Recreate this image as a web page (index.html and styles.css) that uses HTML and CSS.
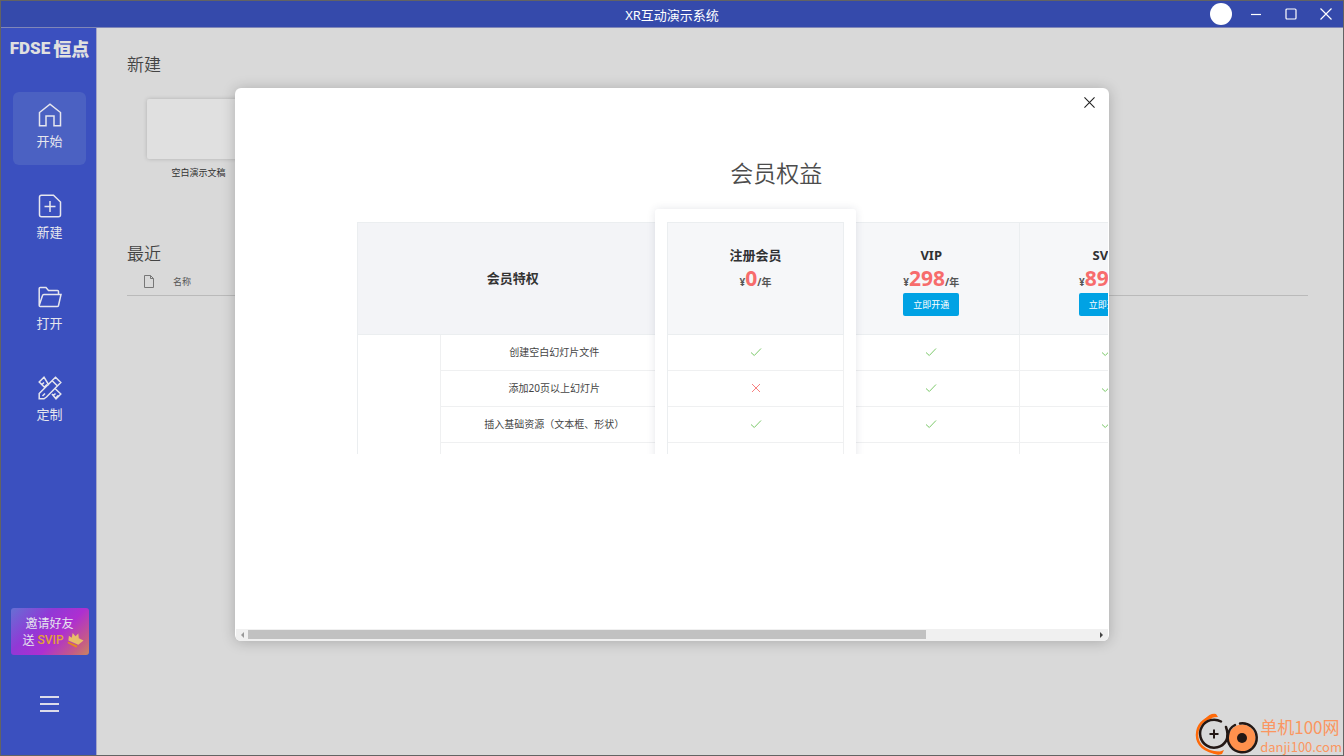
FILE: index.html
```html
<!DOCTYPE html>
<html lang="zh-CN">
<head>
<meta charset="utf-8">
<title>XR互动演示系统</title>
<link rel="stylesheet" href="styles.css">
</head>
<body>
<svg class="defs" aria-hidden="true">
  <symbol id="check" viewBox="0 0 12 12"><path d="M1 6.500 4.300 9.500 11 2.500"/></symbol>
  <symbol id="cross" viewBox="0 0 12 12"><path d="M2 2 10 10M10 2 2 10"/></symbol>
</svg>
<div class="window">
  <header class="titlebar">
    <h1 class="app-title">XR互动演示系统</h1>
    <div class="window-tools">
      <button class="avatar" type="button" aria-label="用户"></button>
      <button class="tool" type="button" aria-label="最小化"><svg viewBox="0 0 12 12"><path d="M1 6.500H11"/></svg></button>
      <button class="tool" type="button" aria-label="最大化"><svg viewBox="0 0 12 12"><rect x="1" y="1" width="10" height="10" rx="1"/></svg></button>
      <button class="tool" type="button" aria-label="关闭"><svg viewBox="0 0 12 12"><path d="M.5.5 11.500 11.500M11.500.5.5 11.500"/></svg></button>
    </div>
  </header>
  <div class="body">
    <aside class="sidebar">
      <div class="logo"><span class="logo-latin">FDSE</span><span class="logo-cn">恒点</span></div>
      <nav class="menu">
        <button class="menu-item active" type="button">
          <svg viewBox="0 0 24 24"><path d="M1.500 9.500 12 1.200 22.500 9.500V22.800H16V13H8V22.800H1.500Z"/></svg>
          <span>开始</span>
        </button>
        <button class="menu-item" type="button">
          <svg viewBox="0 0 24 24"><path d="M3.500 1.200H15.500L22.500 8V20.800Q22.500 22.800 20.500 22.800H3.500Q1.500 22.800 1.500 20.800V3.200Q1.500 1.200 3.500 1.200ZM12 7V18M6.500 12.500H17.500"/></svg>
          <span>新建</span>
        </button>
        <button class="menu-item" type="button">
          <svg viewBox="0 0 24 24"><path d="M1.200 20.500V3.500Q1.200 2.500 2.200 2.500H8L10.500 5.500H19.500Q20.500 5.500 20.500 6.500V9.500M1.200 20.500 4.500 10.500Q4.800 9.500 5.800 9.500H23L20.500 20.500Q20.200 21.500 19.200 21.500H2.200Q1.200 21.500 1.200 20.500Z"/></svg>
          <span>打开</span>
        </button>
        <button class="menu-item" type="button">
          <svg viewBox="0 0 24 24"><path d="M17.500 1.200 22.800 6.500 8.500 21 6 22.800H1.200V17.500ZM14 4.500 19.500 10M4.500 20 7 17.500M9.500 9.500 10.500 8.500 6 1.200 1.200 6 7.500 12.300M4 8.500 6 6.500M6.500 11 9 8.500M14 18 18 22.800 22.800 18 17 12.500M15.500 19.500 17.500 17.500M18 22 20 19.500"/></svg>
          <span>定制</span>
        </button>
      </nav>
      <div class="sidebar-foot">
        <button class="invite" type="button">
          <span>邀请好友</span>
          <span class="invite-row"><span>送</span><b>SVIP</b>
            <svg viewBox="0 0 18 18"><path class="crown" d="M1.500 9 2 4 5 6 6 1 9 4.500 12 1.500 12.500 6.500 17.500 9 12 13.500Z"/><path class="crown-base" d="M1 10 11 14.500 10 16.800 .8 12Z"/></svg>
          </span>
        </button>
        <button class="burger" type="button" aria-label="菜单"><i></i><i></i><i></i></button>
      </div>
    </aside>
    <main class="main">
      <h2 class="section-title">新建</h2>
      <button class="blank" type="button"><span class="blank-sheet"></span><span>空白演示文稿</span></button>
      <h2 class="section-title recent">最近</h2>
      <div class="list-head">
        <svg viewBox="0 0 10 13"><path d="M.5.5H6.500L9.500 3.500V12.500H.5ZM6.500.5V3.500H9.500"/></svg>
        <span>名称</span>
      </div>
    </main>
  </div>

  <div class="overlay">
    <section class="modal" role="dialog" aria-labelledby="benefits">
      <button class="modal-close" type="button" aria-label="关闭"><svg viewBox="0 0 12 12"><path d="M.5.5 11.500 11.500M11.500.5.5 11.500"/></svg></button>
      <div class="scroller">
        <div class="page">
          <h2 class="page-title" id="benefits">会员权益</h2>
          <div class="table-clip">
            <table class="plans">
              <colgroup><col class="c-group"><col class="c-name"><col class="c-plan"><col class="c-plan"><col class="c-plan"></colgroup>
              <thead>
                <tr>
                  <th class="feature" colspan="2">会员特权</th>
                  <th class="picked"><div class="plan-name">注册会员</div><div class="price">¥<b>0</b>/年</div></th>
                  <th><div class="plan-name">VIP</div><div class="price">¥<b>298</b>/年</div><button class="buy" type="button">立即开通</button></th>
                  <th><div class="plan-name">SVIP</div><div class="price">¥<b>898</b>/年</div><button class="buy" type="button">立即开通</button></th>
                </tr>
              </thead>
              <tbody>
                <tr><td class="group" rowspan="4"></td><td>创建空白幻灯片文件</td><td class="picked"><svg class="yes"><use href="#check"/></svg></td><td><svg class="yes"><use href="#check"/></svg></td><td><svg class="yes"><use href="#check"/></svg></td></tr>
                <tr><td>添加20页以上幻灯片</td><td class="picked"><svg class="no"><use href="#cross"/></svg></td><td><svg class="yes"><use href="#check"/></svg></td><td><svg class="yes"><use href="#check"/></svg></td></tr>
                <tr><td>插入基础资源（文本框、形状）</td><td class="picked"><svg class="yes"><use href="#check"/></svg></td><td><svg class="yes"><use href="#check"/></svg></td><td><svg class="yes"><use href="#check"/></svg></td></tr>
                <tr><td></td><td class="picked"></td><td></td><td></td></tr>
              </tbody>
            </table>
          </div>
        </div>
      </div>
      <div class="scrollbar">
        <button class="arrow left" type="button" aria-label="向左"></button>
        <div class="track"><div class="thumb"></div></div>
        <button class="arrow right" type="button" aria-label="向右"></button>
      </div>
    </section>
  </div>

  <div class="watermark">
    <svg viewBox="0 0 64 42">
      <path d="M17 4C8 6 2 13 2 22c0 9 7 17 22 18" fill="none" stroke="#ff6a0a" stroke-width="2.500"/>
      <path d="M10 6Q15 0 21 1L23 4Q16 4 11 8ZM16 38Q24 40 29 37L27 41Q22 43 18 40Z" fill="#ff6a0a"/>
      <path d="M26 8.500A14 14 0 1 0 31 28Q34 22 31 14" fill="none" stroke="#231815" stroke-width="2.500" stroke-linecap="round"/>
      <path d="M19 16.500V25.500M14.500 21H23.500" stroke="#231815" stroke-width="2"/>
      <circle cx="47" cy="25" r="13.500" fill="#ff914d"/>
      <circle cx="47" cy="25" r="5" fill="#231815"/>
      <path d="M45 10.500A14.500 14.500 0 1 1 33 22Q34 15 40 12" fill="none" stroke="#231815" stroke-width="2.500" stroke-linecap="round"/>
    </svg>
    <div class="mark-text"><span class="mark-cn">单机100网</span><span class="mark-url">danji100.com</span></div>
  </div>
</div>
</body>
</html>
```

FILE: styles.css
```css
* { box-sizing: border-box; }
body {
  margin: 0;
  font-family: "Noto Sans", "Noto Sans CJK SC", sans-serif;
  color: #444;
}
h1, h2 { margin: 0; font-weight: 400; }
button {
  margin: 0;
  padding: 0;
  border: 0;
  background: none;
  color: inherit;
  font: inherit;
}
svg { display: block; fill: none; stroke: currentColor; }
.defs { display: none; }

.window {
  position: relative;
  display: flex;
  flex-direction: column;
  min-height: 100vh;
  border: 1px solid #636363;
  background: #d9d9d9;
}
.titlebar {
  display: grid;
  grid-template-columns: 1fr auto 1fr;
  align-items: center;
  height: 27px;
  border-bottom: 1px solid #8087b8;
  background: #354aab;
  color: #fff;
}
.app-title { grid-column: 2; padding-top: 1px; font-size: 13px; line-height: 18px; }
.window-tools {
  display: flex;
  justify-content: flex-end;
  align-items: center;
  gap: 23px;
  padding-right: 11px;
}
.avatar { width: 22px; height: 22px; border-radius: 50%; background: #fff; }
.tool svg { width: 12px; height: 12px; stroke-width: 1.2; }
.avatar + .tool { margin-left: -5px; }

.body { display: flex; flex: 1; }
.sidebar {
  display: flex;
  flex-direction: column;
  align-items: center;
  width: 96px;
  padding-left: 2px;
  border-right: 1px solid #a4a5c9;
  background: #3b50bf;
  color: #e6e6ee;
}
.logo {
  display: flex;
  align-items: center;
  gap: 3px;
  height: 40px;
  margin-bottom: 24px;
  color: #e0e0e0;
  font-weight: 900;
  line-height: 20px;
  white-space: nowrap;
}
.logo-latin { font-family: Roboto, sans-serif; font-size: 17px; }
.logo-cn { font-family: "Noto Sans CJK SC", sans-serif; font-size: 18px; }
.menu { display: flex; flex-direction: column; gap: 18px; }
.menu-item {
  display: flex;
  flex-direction: column;
  align-items: center;
  gap: 4px;
  width: 73px;
  height: 73px;
  padding-top: 11px;
  border-radius: 6px;
  font-size: 13px;
  line-height: 20px;
}
.menu-item svg { width: 24px; height: 24px; stroke-width: 1.5; }
.menu-item.active { background: #4b61c2; }
.sidebar-foot {
  display: flex;
  flex-direction: column;
  align-items: center;
  gap: 41px;
  margin-top: auto;
  padding-bottom: 43px;
}
.invite {
  width: 78px;
  height: 47px;
  border-radius: 3px;
  background: linear-gradient(135deg, #6670d4 0%, #9138d6 35%, #ad2fd1 60%, #c55a88 85%, #c98560 100%);
  font-size: 12px;
  line-height: 17px;
}
.invite-row { display: flex; align-items: center; gap: 3px; padding-left: 12px; }
.invite-row b { color: #e2a23a; font-family: Roboto, sans-serif; font-weight: 500; }
.invite-row svg { width: 17px; height: 17px; stroke: none; }
.crown { fill: #e8bd6a; }
.crown-base { fill: #e58a1f; }
.burger { display: flex; flex-direction: column; gap: 5px; }
.burger i { width: 19px; height: 2px; background: #dcdcea; }

.main { flex: 1; padding: 24px 35px 0 30px; }
.section-title {
  font-size: 17px;
  line-height: 26px;
  font-weight: 350;
  color: #444;
}
.blank {
  display: flex;
  flex-direction: column;
  align-items: center;
  gap: 7px;
  margin: 21px 0 0 20px;
  color: #333;
  font-size: 9px;
  line-height: 14px;
}
.blank-sheet {
  width: 103px;
  height: 60px;
  border-radius: 2px;
  background: #e0e0e0;
  box-shadow: 0 0 4px rgba(0, 0, 0, .18);
}
.recent { margin-top: 61px; }
.list-head {
  display: flex;
  align-items: center;
  gap: 19px;
  height: 29px;
  padding-left: 17px;
  border-bottom: 1px solid #bababa;
  color: #555;
  font-size: 9px;
}
.list-head svg { width: 10px; height: 13px; color: #777; stroke-width: 1; }

.overlay {
  position: absolute;
  inset: 0;
  display: flex;
  justify-content: center;
  align-items: flex-start;
  padding-top: 87px;
}
.modal {
  position: relative;
  width: 65vw;
  padding: 0 1px;
  overflow: hidden;
  border-radius: 6px;
  background: #fff;
  box-shadow: 0 1px 14px rgba(0, 0, 0, .22);
}
.modal-close { position: absolute; top: 9px; right: 14px; color: #222; }
.modal-close svg { width: 11px; height: 11px; stroke-width: 1.2; }
.scroller { min-height: 541px; padding-top: 68px; overflow: hidden; }
.page { width: 1080px; }
.page-title {
  color: #4c4c4c;
  font-size: 23px;
  font-weight: 350;
  line-height: 34px;
  text-align: center;
}
.table-clip { height: 264px; padding-top: 32px; overflow: hidden; }
.plans {
  width: 838px;
  margin: 0 auto;
  border-collapse: separate;
  border-spacing: 0;
  border-left: 1px solid #ebeef0;
  table-layout: fixed;
  font-size: 10px;
  text-align: center;
}
.c-group { width: 83px; }
.c-name { width: 227px; }
.plans th {
  height: 113px;
  padding: 23px 0 0;
  border: solid #ebeef0;
  border-width: 1px 1px 1px 0;
  background: #f6f7f9;
  vertical-align: top;
}
.plans td {
  height: 36px;
  padding: 0 0 2px;
  border: solid #eff0f1;
  border-width: 0 1px 1px 0;
}
.plans th.feature {
  padding: 0 0 2px;
  background: #f3f4f7;
  color: #333;
  font-size: 13px;
  vertical-align: middle;
}
.plans .picked { position: relative; z-index: 2; }
.plans th.picked { z-index: 1; }
/* Raised card behind the selected plan column */
.plans th.picked::before {
  content: "";
  position: absolute;
  z-index: -2;
  inset: -14px -13px -300px;
  border-radius: 3px;
  background: #fff;
  box-shadow: 0 0 8px rgba(40, 50, 80, .12);
}
.plans th.picked::after {
  content: "";
  position: absolute;
  z-index: -1;
  inset: -1px;
  border: 1px solid #ebeef0;
  background: #f6f7f9;
}
.plans td.picked::before {
  content: "";
  position: absolute;
  inset: 0 auto -1px -1px;
  border-left: 1px solid #ebeef0;
}
.plan-name { color: #303133; font-size: 13px; line-height: 19px; }
.price { height: 28px; color: #555; font-size: 10px; line-height: 27px; }
.price b { color: #f76c6c; font-size: 21px; font-weight: 700; }
.buy {
  display: block;
  width: 56px;
  height: 23px;
  margin: 0 auto;
  border-radius: 2px;
  background: #00a2e4;
  color: #fff;
  font-size: 9px;
  font-weight: 400;
}
.plans svg { width: 12px; height: 12px; margin: 0 auto; }
.yes { color: #7cc96a; }
.no { color: #f78080; }

.scrollbar { display: flex; height: 12px; background: #f0f0f0; }
.arrow { display: grid; place-items: center; width: 12px; }
.arrow::before {
  content: "";
  border: solid transparent;
  border-width: 3px 0 3px 3px;
  border-left-color: #444;
}
.arrow.left::before { border-width: 3px 3px 3px 0; border-right-color: #999; }
.track { flex: 1; padding: 1px 0; }
.thumb { width: 80%; height: 9px; background: #c1c1c1; }

.watermark {
  position: absolute;
  right: 1px;
  bottom: 0;
  display: flex;
  align-items: flex-end;
  gap: 1px;
  color: #fb9660;
}
.watermark > svg { width: 64px; height: 42px; stroke: none; }
.mark-text { display: flex; flex-direction: column; white-space: nowrap; }
.mark-cn { font-family: "Noto Sans CJK SC", sans-serif; font-size: 17px; line-height: 22px; }
.mark-url { font-family: "Noto Sans CJK SC", sans-serif; font-size: 13px; line-height: 17px; }
```
